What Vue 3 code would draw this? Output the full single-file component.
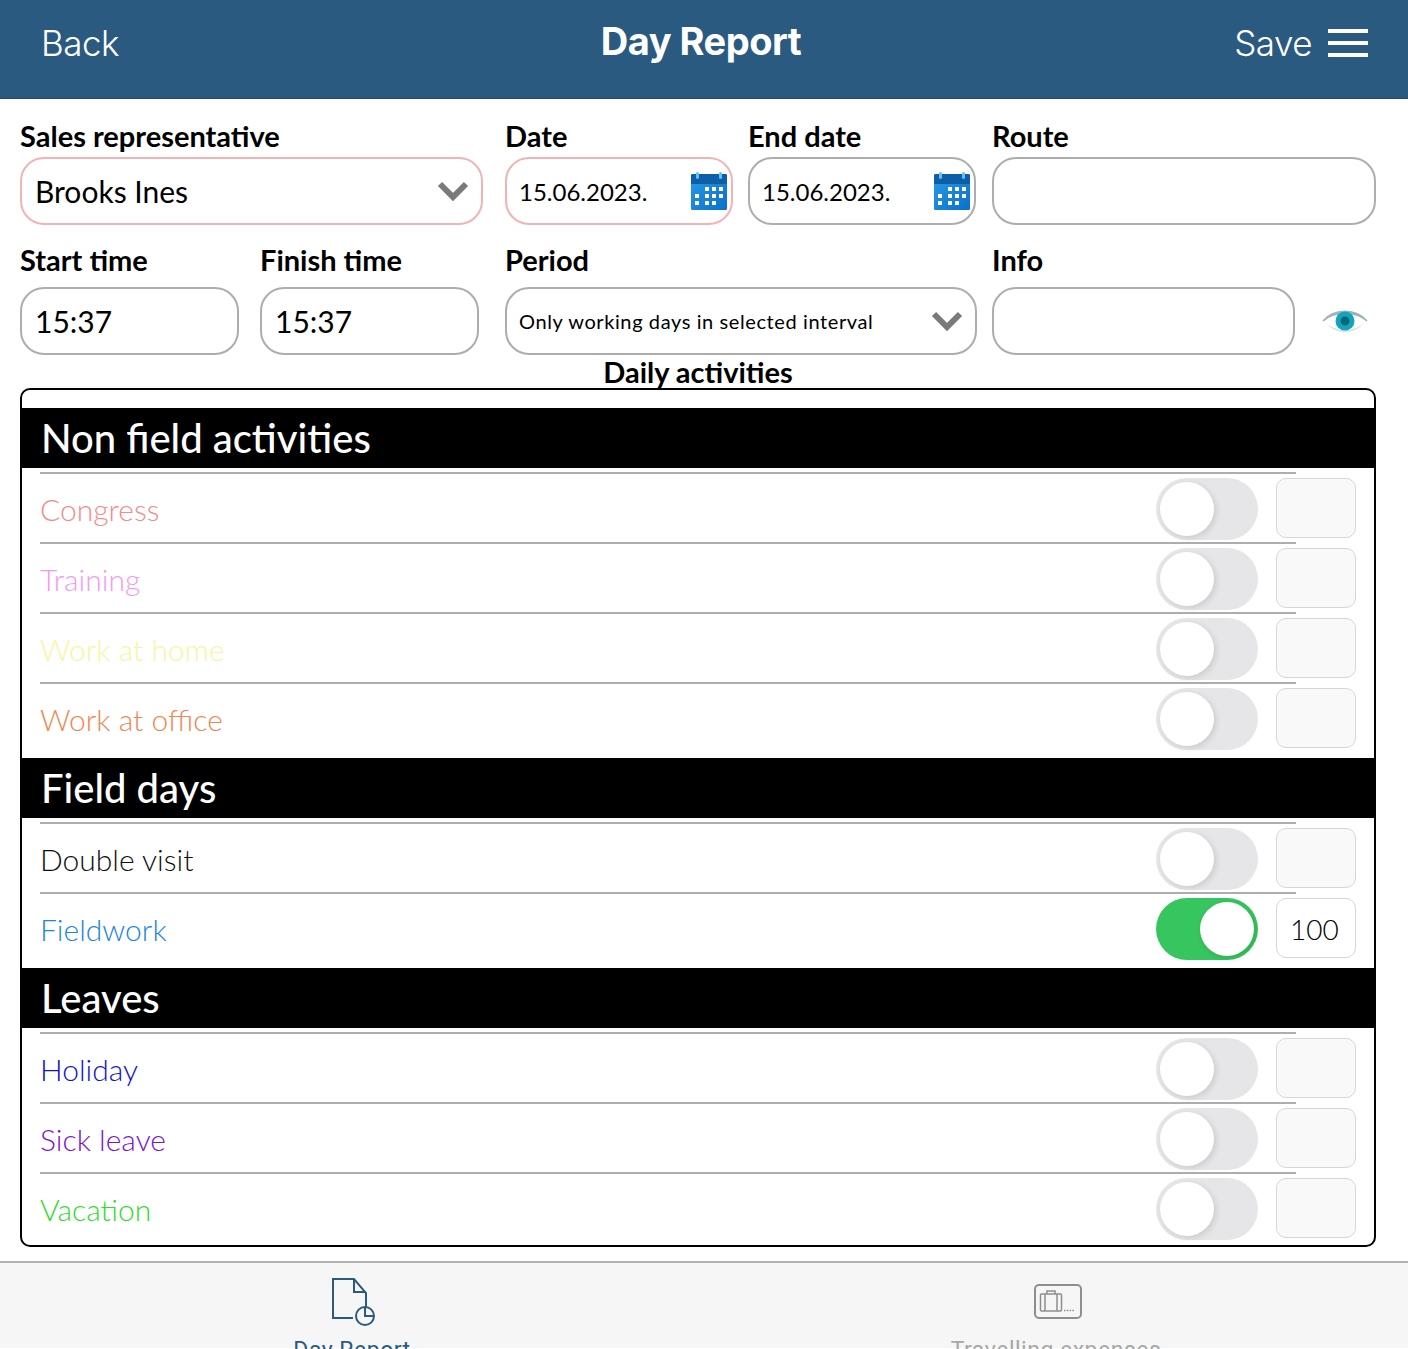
<template>
  <div class="page">
    <header class="topbar">
      <span class="top-link">Back</span>
      <h1 class="top-title">Day Report</h1>
      <div class="top-right">
        <span class="top-link">Save</span>
        <div class="burger"><i></i><i></i><i></i></div>
      </div>
    </header>

    <div class="form">
      <div class="form-row first">
        <div class="field f-rep">
          <label>Sales representative</label>
          <div class="input required big">
            <span>Brooks Ines</span>
            <svg class="chevron" viewBox="0 0 32 22"><path d="M3 4 L16 17 L29 4" /></svg>
          </div>
        </div>
        <div class="field f-date">
          <label>Date</label>
          <div class="input required date">
            <span>15.06.2023.</span>
            <svg class="cal" viewBox="0 0 36 38">
              <defs>
                <linearGradient id="calBody" x1="0" y1="0" x2="1" y2="1">
                  <stop offset="0" stop-color="#2a9be8" />
                  <stop offset="1" stop-color="#0a70c8" />
                </linearGradient>
              </defs>
              <rect x="0" y="2" width="36" height="36" rx="1.5" fill="url(#calBody)" />
              <path d="M0 12 V3.5 A1.5 1.5 0 0 1 1.5 2 H34.5 A1.5 1.5 0 0 1 36 3.5 V12 Z" fill="#0f5fa8" />
              <rect x="5" y="0" width="3" height="7" rx="1.5" fill="#5cc4ee" />
              <rect x="28" y="0" width="3" height="7" rx="1.5" fill="#5cc4ee" />
              <rect v-for="c in calCells" :key="c[0] + '-' + c[1]" :x="c[0]" :y="c[1]" width="4" height="4" fill="#fff" />
            </svg>
          </div>
        </div>
        <div class="field f-date">
          <label>End date</label>
          <div class="input date">
            <span>15.06.2023.</span>
            <svg class="cal" viewBox="0 0 36 38">
              <rect x="0" y="2" width="36" height="36" rx="1.5" fill="url(#calBody)" />
              <path d="M0 12 V3.5 A1.5 1.5 0 0 1 1.5 2 H34.5 A1.5 1.5 0 0 1 36 3.5 V12 Z" fill="#0f5fa8" />
              <rect x="5" y="0" width="3" height="7" rx="1.5" fill="#5cc4ee" />
              <rect x="28" y="0" width="3" height="7" rx="1.5" fill="#5cc4ee" />
              <rect v-for="c in calCells" :key="c[0] + '-' + c[1]" :x="c[0]" :y="c[1]" width="4" height="4" fill="#fff" />
            </svg>
          </div>
        </div>
        <div class="field f-route">
          <label>Route</label>
          <div class="input"></div>
        </div>
      </div>

      <div class="form-row second">
        <div class="field f-time">
          <label>Start time</label>
          <div class="input big"><span>15:37</span></div>
        </div>
        <div class="field f-time">
          <label>Finish time</label>
          <div class="input big"><span>15:37</span></div>
        </div>
        <div class="field f-period">
          <label>Period</label>
          <div class="input small">
            <span>Only working days in selected interval</span>
            <svg class="chevron" viewBox="0 0 32 22"><path d="M3 4 L16 17 L29 4" /></svg>
          </div>
        </div>
        <div class="field f-info">
          <label>Info</label>
          <div class="info-line">
            <div class="input grow"></div>
            <svg class="eye" viewBox="0 0 46 30">
              <path d="M1 15 C12 2 34 2 45 15 C34 4.500 12 4.500 1 15 Z" fill="#9fb3bd" stroke="#9fb3bd" stroke-width="1.500" />
              <path d="M4 17 C14 29 32 29 42 17 C32 26.500 14 26.500 4 17 Z" fill="#d3e0e4" />
              <circle cx="23" cy="15" r="9.500" fill="#10a5bd" />
              <circle cx="23" cy="15" r="4.500" fill="#0a6876" />
            </svg>
          </div>
        </div>
      </div>
    </div>

    <h2 class="daily">Daily activities</h2>

    <div class="card">
      <section v-for="group in groups" :key="group.title" class="group">
        <div class="group-title">{{ group.title }}</div>
        <div v-for="item in group.items" :key="item.name" class="row">
          <div class="line"></div>
          <div class="row-body">
            <span class="row-name" :style="{ color: item.color }">{{ item.name }}</span>
            <div class="toggle" :class="{ on: item.value }"><div class="knob"></div></div>
            <div class="amount" :class="{ filled: item.value }">{{ item.value }}</div>
          </div>
        </div>
      </section>
    </div>

    <nav class="tabs">
      <div class="tab active">
        <svg class="tab-icon" width="46" height="48" viewBox="0 0 46 48">
          <path d="M22 40 H2 V1 H23 L35 15 V29" fill="none" stroke="#2a5a7f" stroke-width="2" />
          <path d="M23 1 V14 H35" fill="none" stroke="#2a5a7f" stroke-width="2" />
          <circle cx="34" cy="38" r="9" fill="none" stroke="#2a5a7f" stroke-width="2" />
          <path d="M34 29 V38 H43" fill="none" stroke="#2a5a7f" stroke-width="2" />
        </svg>
        <span>Day Report</span>
      </div>
      <div class="tab">
        <svg class="tab-icon" width="48" height="36" viewBox="0 0 48 36">
          <rect x="1" y="1" width="46" height="33" rx="4" fill="none" stroke="#8e8e8e" stroke-width="2" />
          <rect x="6.500" y="10" width="21" height="17" rx="1" fill="none" stroke="#8e8e8e" stroke-width="1.500" />
          <path d="M11 10 V27 M23 10 V27 M13 10 V7 H21 V10" fill="none" stroke="#8e8e8e" stroke-width="1.500" />
          <path d="M30 26.500 H41" fill="none" stroke="#8e8e8e" stroke-width="1.500" stroke-dasharray="1.500 1.300" />
        </svg>
        <span>Travelling expenses</span>
      </div>
    </nav>
  </div>
</template>

<script setup>
// positions of the day squares in the calendar icon
const calCells = [
  [14, 15], [21, 15], [28, 15],
  [4, 22], [14, 22], [21, 22], [28, 22],
  [4, 29], [14, 29], [21, 29],
]

const groups = [
  {
    title: 'Non field activities',
    items: [
      { name: 'Congress', color: '#f58a8a', value: '' },
      { name: 'Training', color: '#f29af2', value: '' },
      { name: 'Work at home', color: '#f6f6a0', value: '' },
      { name: 'Work at office', color: '#f0874f', value: '' },
    ],
  },
  {
    title: 'Field days',
    items: [
      { name: 'Double visit', color: '#111111', value: '' },
      { name: 'Fieldwork', color: '#1c86e0', value: '100' },
    ],
  },
  {
    title: 'Leaves',
    items: [
      { name: 'Holiday', color: '#1212c8', value: '' },
      { name: 'Sick leave', color: '#7a12d8', value: '' },
      { name: 'Vacation', color: '#2fdc2f', value: '' },
    ],
  },
]
</script>

<style>
html,
body {
  margin: 0;
  background: #fff;
}
</style>

<style scoped>
.page {
  width: 1408px;
  height: 1349px;
  overflow: hidden;
  background: #fff;
  font-family: Lato, "Liberation Sans", sans-serif;
  color: #000;
}

.topbar {
  height: 99px;
  box-sizing: border-box;
  background: #2a5a7f;
  border-bottom: 1px solid #234c6c;
  display: flex;
  align-items: center;
  justify-content: space-between;
  padding: 0 40px 12px 41px;
  position: relative;
  color: #fff;
}

.top-link {
  font-family: Inter, sans-serif;
  font-size: 35px;
  font-weight: 300;
  letter-spacing: -0.5px;
}

.top-title {
  position: absolute;
  left: 0;
  right: 6px;
  top: 17px;
  margin: 0;
  text-align: center;
  font-family: Inter, sans-serif;
  font-size: 38px;
  line-height: 48px;
  font-weight: 700;
  letter-spacing: -0.5px;
}

.top-right {
  display: flex;
  align-items: center;
  gap: 16px;
}

.burger {
  display: flex;
  flex-direction: column;
  gap: 8px;
}

.burger i {
  display: block;
  width: 40px;
  height: 4px;
  background: #fff;
}

.form {
  padding: 20px 32px 0 20px;
}

.form-row {
  display: flex;
}

.form-row.second {
  margin-top: 18px;
}

.field label {
  display: block;
  height: 38px;
  line-height: 34px;
  font-size: 29px;
  font-weight: 700;
  white-space: nowrap;
}

.form-row.second .field label {
  height: 44px;
  line-height: 34px;
}

.input {
  height: 68px;
  box-sizing: border-box;
  border: 2px solid #adadad;
  border-radius: 24px;
  display: flex;
  align-items: center;
  justify-content: space-between;
  padding: 0 12px;
  background: #fff;
  font-size: 24px;
  white-space: nowrap;
}

.input.required {
  border-color: #f3b3b5;
}

.input.big {
  font-size: 30px;
  padding-left: 13px;
}

.input.small {
  font-size: 20px;
  letter-spacing: 0.6px;
}

.input.date {
  padding-right: 4px;
}

.grow {
  flex: 1;
}

.f-rep {
  width: 463px;
  margin-right: 22px;
}

.f-date {
  width: 228px;
  margin-right: 15px;
}

.f-route {
  width: 384px;
  margin-left: 1px;
}

.f-time {
  width: 219px;
  margin-right: 21px;
}

.f-period {
  width: 472px;
  margin-left: 5px;
  margin-right: 15px;
}

.f-info {
  width: 376px;
}

.info-line {
  display: flex;
  align-items: center;
  gap: 27px;
}

.chevron {
  width: 32px;
  height: 22px;
  fill: none;
  stroke: #7a7a7a;
  stroke-width: 6;
}

.cal {
  width: 36px;
  height: 38px;
}

.eye {
  width: 46px;
  height: 30px;
}

.daily {
  margin: 0 32px 0 20px;
  height: 33px;
  line-height: 34px;
  text-align: center;
  font-size: 29px;
  font-weight: 700;
}

.card {
  margin: 0 32px 0 20px;
  height: 859px;
  box-sizing: border-box;
  border: 2px solid #000;
  border-radius: 10px;
  padding-top: 18px;
}

.group {
  padding-bottom: 10px;
}

.group-title {
  height: 60px;
  line-height: 60px;
  background: #000;
  color: #fff;
  padding-left: 19px;
  font-size: 40px;
  font-weight: 500;
}

.row {
  height: 70px;
  padding-top: 4px;
  box-sizing: border-box;
}

.line {
  height: 2px;
  width: 1256px;
  margin-left: 18px;
  background: #adadad;
}

.row-body {
  display: flex;
  align-items: flex-start;
  padding: 4px 18px 0;
}

.row-name {
  flex: 1;
  font-size: 30px;
  font-weight: 300;
  line-height: 62px;
}

.toggle {
  width: 102px;
  height: 62px;
  box-sizing: border-box;
  border-radius: 31px;
  background: #e6e6e8;
  padding: 4px;
  display: flex;
}

.toggle.on {
  background: #36c55e;
  justify-content: flex-end;
}

.knob {
  width: 54px;
  height: 54px;
  border-radius: 50%;
  background: #fff;
  box-shadow: 2px 2px 6px rgba(0, 0, 0, 0.12);
}

.amount {
  width: 80px;
  height: 60px;
  margin-left: 18px;
  box-sizing: border-box;
  border: 1px solid #d6d6d6;
  border-radius: 10px;
  background: #f9f9f9;
  font-size: 28px;
  font-weight: 300;
  line-height: 60px;
  padding-left: 13px;
}

.amount.filled {
  background: #fff;
}

.tabs {
  margin-top: 14px;
  height: 87px;
  box-sizing: border-box;
  border-top: 2px solid #b2b2b2;
  background: #f6f6f6;
  display: flex;
}

.tab {
  flex: 1;
  display: flex;
  flex-direction: column;
  align-items: center;
  padding-top: 15px;
  font-family: Roboto, sans-serif;
  font-size: 23px;
  letter-spacing: 0.5px;
  color: #a8a8a8;
}

.tab.active {
  color: #2a5a7f;
}

.tab-icon {
  height: 48px;
  flex: none;
  margin-left: 4px;
}

.tab span {
  margin-top: 11px;
  white-space: nowrap;
}
</style>
